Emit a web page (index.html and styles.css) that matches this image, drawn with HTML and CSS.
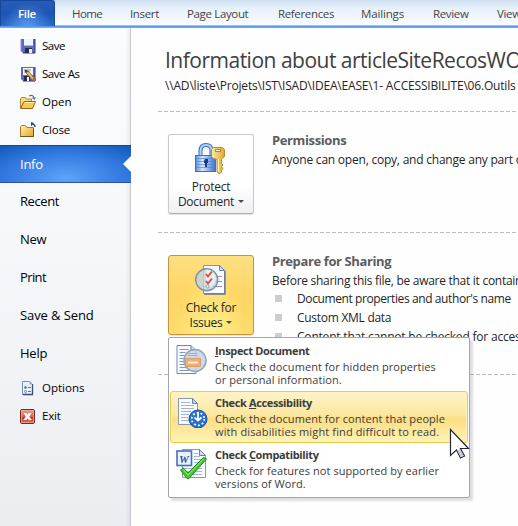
FILE: index.html
```html
<!DOCTYPE html>
<html lang="en">
<head>
<meta charset="utf-8">
<title>Document information</title>
<link rel="stylesheet" href="styles.css">
</head>
<body>
<nav class="tabs">
  <span class="tab file">File</span>
  <span class="tab home">Home</span>
  <span class="tab insert">Insert</span>
  <span class="tab layout">Page Layout</span>
  <span class="tab refs">References</span>
  <span class="tab mail">Mailings</span>
  <span class="tab review">Review</span>
  <span class="tab view">View</span>
</nav>
<div class="body">
  <aside class="side">
    <div class="cmd save"><svg width="16" height="16" viewBox="0 0 16 16"><path d="M1 1h14v14H3l-2-2z" fill="#6267bd"/><path d="M1 1v12l2 2" fill="none" stroke="#8c8fe0"/><path d="M15 1v14H3" fill="none" stroke="#35357c"/><path d="M4 1h9v7H4z" fill="#eef4ff"/><path d="M4 7h9v1H4z" fill="#a9bde8"/><path d="M5 10h7v5H5z" fill="#272d4c"/><path d="M9 11h3v4H9z" fill="#e8edf2"/></svg><span>Save</span></div>
    <div class="cmd save"><svg width="16" height="16" viewBox="0 0 16 16"><path d="M1 1h14v14H3l-2-2z" fill="#6267bd"/><path d="M15 1v14H3" fill="none" stroke="#35357c"/><path d="M3 2h10v7H3z" fill="#f2f6ff"/><path d="M4 4h7M4 6h6" stroke="#8390b4"/><path d="M4 10h6v5H4z" fill="#272d4c"/><path d="M7 11h2v4H7z" fill="#fff"/><path d="M5 4l3 1 7 8v2l-2-.4L6 7z" fill="#eec064" stroke="#79522c" stroke-width=".8"/><path d="M5 4l3 1-2 2z" fill="#47342c"/><path d="M12.500 13l2-2 1.500 2v2h-2z" fill="#b75b43"/></svg><span>Save As</span></div>
    <div class="cmd"><svg width="16" height="16" viewBox="0 0 16 16"><path d="M.5 14.500V4.500l1-1h4l1 1.500h5v3" fill="#f7dc83" stroke="#ab8431"/><path d="M.7 14.500L4 7.500h11.500l-3 7z" fill="#f7c856" stroke="#92661d"/><path d="M4.500 8.500h10" stroke="#ffedaa"/><path d="M9 2q4-2 5 2" fill="none" stroke="#5b7599" stroke-width="1.300"/><path d="M11.500 3.500h4.500L14.500 6z" fill="#5b7599"/></svg><span>Open</span></div>
    <div class="cmd close"><svg width="16" height="16" viewBox="0 0 16 16"><defs><linearGradient id="fold" x2="1" y2="1"><stop stop-color="#fff0ad"/><stop offset="1" stop-color="#e6a52d"/></linearGradient></defs><path d="M.5 14.500V4.500l1-1h4l1.500 2h6.500v9z" fill="url(#fold)" stroke="#a27a31"/><path d="M.5 14.500h13v-8" fill="none" stroke="#6f5421"/><path d="M15 5q0-3-3-3" fill="none" stroke="#34506d" stroke-width="1.400"/><path d="M11 0v4.500L14 1z" fill="#34506d"/></svg><span>Close</span></div>
    <div class="nav active">Info</div>
    <div class="nav recent">Recent</div>
    <div class="nav">New</div>
    <div class="nav print">Print</div>
    <div class="nav send">Save &amp; Send</div>
    <div class="nav">Help</div>
    <div class="cmd opt"><svg width="16" height="16" viewBox="0 0 16 16"><path d="M2.500 1.500h7l3 3v10h-10z" fill="#eaf2fb" stroke="#7591b5"/><path d="M12.500 4v10.500H3" fill="none" stroke="#344e73" stroke-width="1.300"/><path d="M9.500 1v3.500h3z" fill="#91abc9"/><path d="M8 7.500h3M8 11.500h3" stroke="#587391"/><circle cx="5.500" cy="7.500" r="1.300" fill="#50698c"/><circle cx="5.500" cy="11.500" r="1" fill="#fff" stroke="#50698c" stroke-width=".8"/></svg><span>Options</span></div>
    <div class="cmd close"><svg width="16" height="16" viewBox="0 0 16 16"><defs><linearGradient id="red" x2="0" y2="1"><stop stop-color="#efa28f"/><stop offset=".5" stop-color="#d9634c"/><stop offset=".52" stop-color="#bd321d"/><stop offset="1" stop-color="#dc7960"/></linearGradient></defs><rect x=".5" y="1.500" width="14" height="14" rx="1.500" fill="url(#red)" stroke="#70292c"/><rect x="1.500" y="2.500" width="12" height="12" fill="none" stroke="#f0ac9c" stroke-opacity=".7"/><path d="M3.500 5h3l1 1.700L8.600 5h3L9.300 8.500l2.500 3.500H8.700L7.500 10.200 6.400 12h-3l2.500-3.500z" fill="#fff"/></svg><span>Exit</span></div>
  </aside>
  <main class="main">
    <h1>Information about articleSiteRecosWORD</h1>
    <p class="path">\\AD\liste\Projets\IST\ISAD\IDEA\EASE\1- ACCESSIBILITE\06.Outils</p>
    <section class="row perm">
      <div class="big">
        <svg width="32" height="32" viewBox="0 0 32 32"><defs><linearGradient id="lock" x2="1"><stop stop-color="#5c8ee0"/><stop offset=".35" stop-color="#d6e9ff"/><stop offset="1" stop-color="#3c70d1"/></linearGradient><linearGradient id="key" x2="1"><stop stop-color="#ffeb9b"/><stop offset="1" stop-color="#dca831"/></linearGradient></defs><path d="M5.500 13V8q0-6 5.500-6t5.500 6v5" fill="none" stroke="#366bc4" stroke-width="4"/><path d="M5.500 13V8q0-6 5.500-6t5.500 6v5" fill="none" stroke="#b5d3ff" stroke-width="2"/><rect x=".5" y="12.500" width="20" height="16" fill="url(#lock)" stroke="#3e6fc6"/><path d="M1 15.500h19M1 18.500h19M1 21.500h19M1 24.500h19" stroke="#517fcf" stroke-opacity=".65"/><path d="M10 16h3v4h-1v4h-2v-4H9v-2z" fill="#173b86"/><path d="M16.500 6.500l2-2h9l2 2v7l-2 2-1 1v4l1.500 1.500-1.500 1.500 1.500 2-1.500 1.500v2l-2 2-2.500-2V16.500l-3.500-1-2-2z" fill="url(#key)" stroke="#bd8b2d"/><path d="M23.500 16v13" stroke="#fff2b9"/><path d="M20.500 6.500h5v2h-5z" fill="#fff" stroke="#b48127"/></svg>
        <span>Protect<br>Document<i class="arrow"></i></span>
      </div>
      <div class="copy">
        <h2>Permissions</h2>
        <p class="anyone">Anyone can open, copy, and change any part of</p>
      </div>
    </section>
    <section class="row share">
      <div class="big on">
        <svg width="32" height="32" viewBox="0 0 32 32"><path d="M8.500 1.500h16l5 5v23h-21z" fill="#f8fbff" stroke="#8192b4"/><path d="M30 7v23H9" fill="none" stroke="#667999" stroke-width="1.400"/><path d="M24.500 1.500v5h5z" fill="#d2dff2" stroke="#6881a8"/><path d="M20 12.500h7M20 17.500h7M18 22.500h9" stroke="#8794b2"/><circle cx="11.700" cy="15.700" r="11" fill="#c2d2e4" fill-opacity=".78" stroke="#8093a4" stroke-width="1.500"/><path d="M11 5.500q9 0 10 9-1 8-10 10z" fill="#f2f6fb" opacity=".7"/><path d="M11 10l2 2.500 4-5M11 17l2 2.500 4-5" fill="none" stroke="#e05330" stroke-width="2"/><circle cx="12.500" cy="22.500" r="1.500" fill="#fff" stroke="#8293b0"/></svg>
        <span>Check for<br>Issues<i class="arrow"></i></span>
      </div>
      <div class="copy">
        <h2 class="prep">Prepare for Sharing</h2>
        <p class="before">Before sharing this file, be aware that it contains:</p>
        <ul>
          <li class="l1">Document properties and author's name</li>
          <li class="l2">Custom XML data</li>
          <li class="l3">Content that cannot be checked for accessibility</li>
        </ul>
      </div>
      <div class="menu">
        <div class="item">
          <svg width="32" height="32" viewBox="1.5 0 32 32"><path d="M2.500 1.500h14l5 5v23h-19z" fill="#f8fbff" stroke="#7187b1"/><path d="M16.500 1.500v5h5" fill="#c6d5ec" stroke="#6881a8"/><path d="M5 5.500h9M5 8.500h6M5 11.500h5M5 14.500h4M5 17.500h4M5 20.500h5M5 23.500h8M5 26.500h13" stroke="#7b98cb"/><circle cx="20.500" cy="16.500" r="11" fill="#c4d5e9" fill-opacity=".86" stroke="#9ba5b4" stroke-width="1.600"/><path d="M13 9.500h10M13 11.500h10" stroke="#98b0d5"/><path d="M11 14.500h15v8H11z" fill="#edae71" stroke="#dba06a"/><path d="M13.500 17.500h10v2h-10z" fill="#ffebcd"/></svg>
          <div><b class="m1"><u>I</u>nspect Document</b><p>Check the document for hidden properties</p><p>or personal information.</p></div>
        </div>
        <div class="item hot">
          <svg width="32" height="32" viewBox="0 0 32 32"><path d="M2.500 2.500h14l5 5v21h-19z" fill="#f8fbff" stroke="#8b99b6"/><path d="M16.500 2.500v5h5z" fill="#c6d5ec" stroke="#6881a8"/><path d="M5 6.500h9M5 9.500h13M5 12.500h13M5 15.500h10M5 18.500h8M5 21.500h7M5 24.500h8" stroke="#a5b2cb"/><circle cx="22" cy="23" r="9" fill="#276fd0" stroke="#164da2"/><circle cx="22" cy="23" r="6.300" fill="none" stroke="#fff" stroke-width="1.800" stroke-dasharray="1.800 2.150"/><path d="M22 16v8M18.500 21.500l3.500 3 3.500-3" fill="none" stroke="#fff" stroke-width="1.800"/></svg>
          <div><b>Check <u>A</u>ccessibility</b><p>Check the document for content that people</p><p class="wide">with disabilities might find difficult to read.</p></div>
        </div>
        <div class="item">
          <svg width="32" height="32" viewBox="0 0 32 32"><path d="M6.500 1.500h17l6 6v22h-23z" fill="#f8fbff" stroke="#8498bc"/><path d="M23.500 1.500v6h6z" fill="#d1def0" stroke="#6881a8"/><path d="M18 5.500h4M18 8.500h6M18 11.500h9M18 14.500h9M9 20.500h17M9 23.500h17M9 26.500h17" stroke="#a2b7da"/><rect x="1" y="3" width="14.500" height="14.500" fill="#eaf2ff" stroke="#4570b9" stroke-width="1.600"/><text class="w" x="8" y="14.500" text-anchor="middle">W</text><path d="M4.500 22l3-2 4.500 5L27.500 9.500l3 1.500L13 30.500h-2z" fill="#45ca30" stroke="#188b20"/><path d="M7.500 21.500l4.500 5.500L27.500 11" fill="none" stroke="#90ee6c"/></svg>
          <div><b>Check <u>C</u>ompatibility</b><p>Check for features not supported by earlier</p><p>versions of Word.</p></div>
        </div>
        <svg class="cursor" width="22" height="32" viewBox="0 0 22 32"><path d="M1.500 1.500v26l6-5.500 4 8 4-2-4-7.500h8z" fill="#fff" stroke="#26263a" stroke-width="1.200"/><path d="M8.200 22.500l3.500 6.800 2.800-1.400-3.600-7z" fill="#c6c8d0"/></svg>
      </div>
    </section>
    <section class="row rest"></section>
  </main>
</div>
</body>
</html>
```
FILE: styles.css
```css
* { box-sizing: border-box; }
body { margin: 0; width: 518px; height: 526px; overflow: hidden; font: 12px/16px "Open Sans", "Noto Sans", sans-serif; color: #262626; background: #fefefe; }
h1, h2, p, ul { margin: 0; padding: 0; font-weight: 400; }
svg { flex: none; display: block; }
.tabs { display: flex; height: 28px; background: linear-gradient(#cfe0f2, #e8f1fb 9px, #fafcff 25px, #a9bdd6 25px, #a9bdd6 26px, #4e93e8 26px, #78b0ef); color: #444; white-space: nowrap; }
.tab { height: 28px; line-height: 28px; font-size: 11.5px; letter-spacing: -.35px; flex: none; }
.file { width: 55px; height: 26px; padding-left: 17px; border: 1px solid #17479d; border-bottom: 0; border-radius: 0 3px 0 0; background: radial-gradient(ellipse at 50% 110%, #5a9bf0, transparent 65%), linear-gradient(#285db7, #1f55b5 50%, #2867ca); color: #fff; font-weight: 600; line-height: 26px; }
.home { width: 75px; padding-left: 17px; letter-spacing: -.6px; }
.insert { width: 57px; }
.layout { width: 91px; }
.refs { width: 83px; }
.mail { width: 72px; letter-spacing: -.15px; }
.review { width: 64px; }
.body { display: flex; height: 498px; }
.side { width: 131px; flex: none; padding-top: 4px; background: linear-gradient(90deg, transparent 125px, rgba(90,100,120,.09) 130px, #c5c8cd 130px), linear-gradient(#fbfcfd, #f5f7fa 45%, #ecedf1); color: #000; }
.cmd { display: flex; align-items: center; height: 28px; padding-left: 20px; gap: 6px; font-size: 11.5px; }
.save { letter-spacing: -.45px; }
.close { letter-spacing: -.2px; }
.opt { margin-top: 2px; }
.nav { height: 38px; line-height: 38px; padding-left: 20px; font-size: 13px; letter-spacing: -.25px; }
.print { letter-spacing: -.6px; }
.send { letter-spacing: -.1px; }
.active { position: relative; height: 38px; margin-top: 1px; line-height: 36px; color: #fff; border-top: 1px solid #10479a; border-bottom: 1px solid #2854ad; background: radial-gradient(ellipse 95px 42px at 50% 90%, #5ba5f7, #3b80e6 50%, transparent), linear-gradient(#1459bc, #1f66cc); }
.active::after { content: ""; position: absolute; right: 0; top: 10px; border: 8px solid transparent; border-right-color: #fefefe; border-left: 0; }
.recent { margin-top: -1px; letter-spacing: -.4px; }
.main { flex: 1; min-width: 0; padding-left: 27px; white-space: nowrap; overflow: hidden; }
h1 { margin: 16px 0 0 7px; font-size: 21px; line-height: 32px; letter-spacing: -.5px; color: #404040; }
.path { margin: 1px 0 0 7px; height: 34px; line-height: 17px; letter-spacing: -.18px; }
.row { position: relative; display: flex; gap: 18px; padding: 23px 0 0 10px; background: repeating-linear-gradient(90deg, #bdbdbd 0 4px, transparent 4px 6px) 0 0 / 100% 1px no-repeat; }
.perm { height: 121px; }
.share { height: 142px; }
.big { width: 86px; height: 80px; flex: none; display: flex; flex-direction: column; align-items: center; padding-top: 8px; border: 1px solid #c8c9cc; border-bottom-color: #aaacb0; border-radius: 3px; background: linear-gradient(#fff 65%, #eff0f2); text-align: center; line-height: 15px; letter-spacing: -.3px; box-shadow: 0 1px 1px #e2e2e4; }
.big svg { margin-bottom: 4px; }
.on { border-color: #c3963d; background: radial-gradient(ellipse at 50% 105%, #fff18c, transparent 60%), linear-gradient(#fce082, #ffd564 50%, #fcdc6c); }
.arrow { display: inline-block; margin: 0 0 3px 4px; border: 3px solid transparent; border-top: 3px solid #4b4b4b; border-bottom: 0; }
h2 { font-size: 13px; line-height: 16px; font-weight: 700; color: #5c5c5c; margin-top: -2px; letter-spacing: -.38px; }
.copy p { margin-top: 4px; letter-spacing: -.22px; }
.copy .before { letter-spacing: -.28px; }
ul { list-style: none; }
li { display: flex; align-items: center; height: 19px; font-size: 12px; letter-spacing: -.28px; }
.l1 { letter-spacing: -.4px; }
.l3 { letter-spacing: -.2px; }
li::before { content: ""; width: 7px; height: 7px; margin: 0 15px 0 3px; background: #cdcdcd; }
.menu { position: absolute; left: 10px; top: 105px; width: 302px; height: 161px; padding: 1px; border: 1px solid #a3a6ad; border-radius: 2px; background: #fff; box-shadow: 3px 3px 2px rgba(100,95,120,.2); font-size: 11px; line-height: 13px; color: #3c3c3c; z-index: 2; }
.item { display: flex; height: 52px; padding: 5px 0 0 6px; gap: 7px; }
.item p { letter-spacing: .06px; }
.item .wide { letter-spacing: .13px; }
.item b { display: block; line-height: 13px; height: 16px; letter-spacing: -.36px; }
.hot { border: 1px solid #efc84c; border-radius: 3px; padding: 4px 0 0 5px; background: linear-gradient(#fef3ca, #fde7a0 45%, #fcdf82 55%, #fff3b8); box-shadow: inset 0 0 0 1px #fff2bd; }
.w { font: italic bold 11px "Liberation Serif", serif; fill: #2856a6; }
.cursor { position: absolute; left: 280px; top: 90px; }
.rest { height: 120px; }
```
